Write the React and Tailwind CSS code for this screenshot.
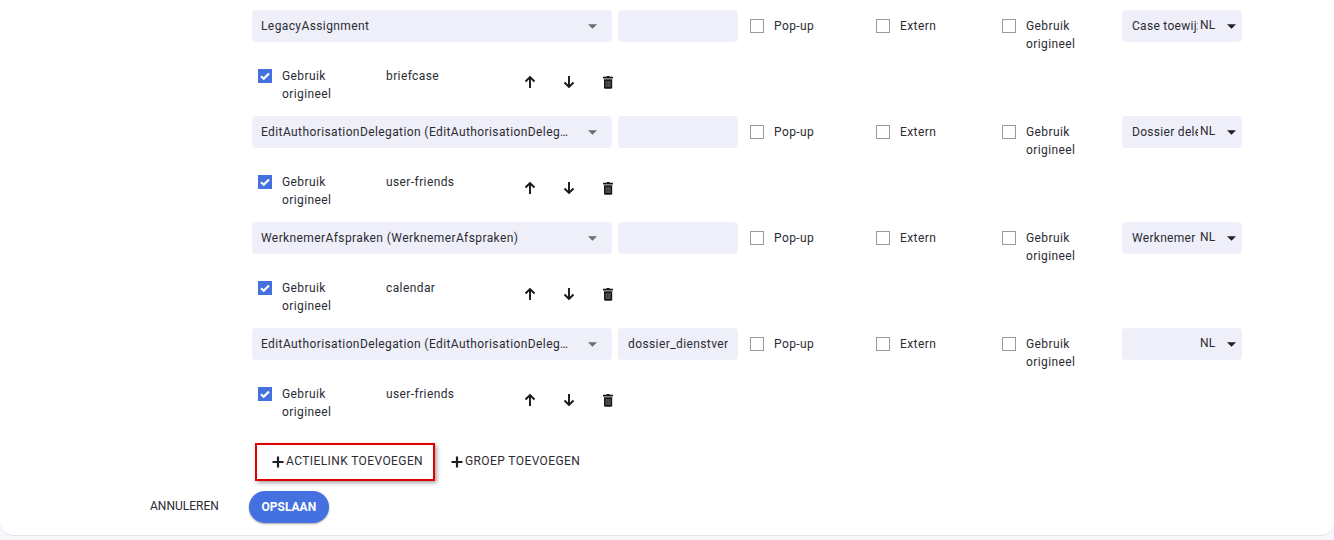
const font = { fontFamily: "Roboto, sans-serif" };

function Caret({ className }) {
  return (
    <svg width="9" height="5" viewBox="0 0 10 5" className={className}>
      <path d="M0 0h10L5 5z" fill="currentColor" />
    </svg>
  );
}

function Check({ checked, label }) {
  return (
    <div className="flex w-[126px] items-start">
      <span
        className={`mt-[2px] flex h-[14px] w-[14px] shrink-0 items-center justify-center ${
          checked ? "bg-[#4570e0]" : "border border-[#9a9a9a] bg-white"
        }`}
      >
        {checked && (
          <svg width="12" height="12" viewBox="0 0 12 12">
            <path d="M2 6.2l2.7 2.6L10 3.4" fill="none" stroke="#fff" strokeWidth="2.2" />
          </svg>
        )}
      </span>
      <span className="ml-[10px] w-[62px] shrink-0 whitespace-normal text-[12px] leading-[18px] tracking-[0.4px] text-[#2b2b33]">
        {label}
      </span>
    </div>
  );
}

function Row({ select, input, title, icon }) {
  return (
    <div className="h-[106px] pt-[10px]">
      <div className="flex items-start">
        <div className="flex h-[32px] w-[360px] items-center justify-between rounded-[4px] bg-[#efeff9] pl-[9px] pr-[15px]">
          <span className="truncate text-[12px] tracking-[0.4px] text-[#2b2b33]">{select}</span>
          <Caret className="ml-[16px] shrink-0 text-[#6b6b73]" />
        </div>
        <div className="ml-[6px] flex h-[32px] w-[120px] items-center rounded-[4px] bg-[#efeff9] px-[10px] text-[12px] tracking-[0.4px] text-[#2b2b33]">
          <span className="w-full overflow-hidden whitespace-nowrap">{input}</span>
        </div>
        <div className="ml-[12px] flex pt-[7px]">
          <Check label="Pop-up" />
          <Check label="Extern" />
          <div className="w-[120px]">
            <Check label="Gebruik origineel" />
          </div>
        </div>
        <div className="flex h-[32px] w-[120px] items-center rounded-[4px] bg-[#efeff9] pl-[10px] pr-[6px] text-[12px] tracking-[0.3px] text-[#2b2b33]">
          <span className="w-[66px] shrink-0 overflow-hidden whitespace-nowrap">{title}</span>
          <span className="-mt-[2px] ml-[2px]">NL</span>
          <Caret className="ml-auto shrink-0 text-[#1f1f25]" />
        </div>
      </div>
      <div className="mt-[14px] ml-[6px] flex items-start">
        <div className="w-[128px]">
          <Check checked label="Gebruik origineel" />
        </div>
        <span className="w-[137px] text-[12px] leading-[18px] tracking-[0.4px] text-[#2b2b33]">{icon}</span>
        <div className="flex items-center pt-[8px] text-[#17171c]">
          <svg width="14" height="14" viewBox="0 0 14 14">
            <path d="M7 13V2M2.5 6.5L7 2l4.5 4.5" fill="none" stroke="currentColor" strokeWidth="1.9" />
          </svg>
          <svg width="14" height="14" viewBox="0 0 14 14" className="ml-[25px]">
            <path d="M7 1v11M2.5 7.5L7 12l4.5-4.5" fill="none" stroke="currentColor" strokeWidth="1.9" />
          </svg>
          <svg width="14" height="14" viewBox="0 0 14 14" className="ml-[25px]">
            <path d="M2 1.8h3.2l.7-.9h2.4l.7.9H12v1.6H2zM3 4.3h8.2v8.6l-.9.9H3.9l-.9-.9z" fill="currentColor" />
            <path d="M5.2 6v6M7.1 6v6M9 6v6" stroke="#8b8b8b" strokeWidth=".8" />
          </svg>
        </div>
      </div>
    </div>
  );
}

function Plus() {
  return (
    <svg width="12" height="12" viewBox="0 0 12 12" className="mr-[2px] mt-[1px] shrink-0">
      <path d="M6 .5v11M.5 6h11" stroke="#1f1f25" strokeWidth="2.2" />
    </svg>
  );
}

export default function App() {
  return (
    <div style={font} className="h-[540px] w-[1334px] overflow-hidden bg-[#f7f7fb]">
      <div className="h-[536px] rounded-b-[14px] border-b border-[#e3e3ee] bg-white">
        <div className="ml-[252px]">
          <Row select="LegacyAssignment" title="Case toewijzing" icon="briefcase" />
          <Row select="EditAuthorisationDelegation (EditAuthorisationDelegation)" title="Dossier delegatie" icon="user-friends" />
          <Row select="WerknemerAfspraken (WerknemerAfspraken)" title="Werknemer afspraken" icon="calendar" />
          <Row select="EditAuthorisationDelegation (EditAuthorisationDelegation)" input="dossier_dienstverlening" title="" icon="user-friends" />
          <div className="mt-[19px] ml-[3px] flex items-center">
            <button className="flex h-[38px] w-[180px] items-center border-2 border-[#e30000] bg-white pb-[2px] pl-[15px] text-[12px] tracking-[0.4px] text-[#2b2b33] shadow-[2px_2px_4px_rgba(0,0,0,0.35)]">
              <Plus />
              ACTIELINK TOEVOEGEN
            </button>
            <button className="ml-[16px] flex items-center pb-[2px] text-[12px] tracking-[0.4px] text-[#2b2b33]">
              <Plus />
              GROEP TOEVOEGEN
            </button>
          </div>
        </div>
        <div className="mt-[10px] ml-[150px] flex items-center">
          <span className="-mt-[2px] text-[12px] text-[#2b2b33]">ANNULEREN</span>
          <button className="ml-[30px] h-[32px] w-[80px] rounded-full bg-[#4570e0] text-[12px] font-bold text-white shadow-[0_1px_2px_rgba(0,0,0,0.35)]">
            OPSLAAN
          </button>
        </div>
      </div>
    </div>
  );
}
